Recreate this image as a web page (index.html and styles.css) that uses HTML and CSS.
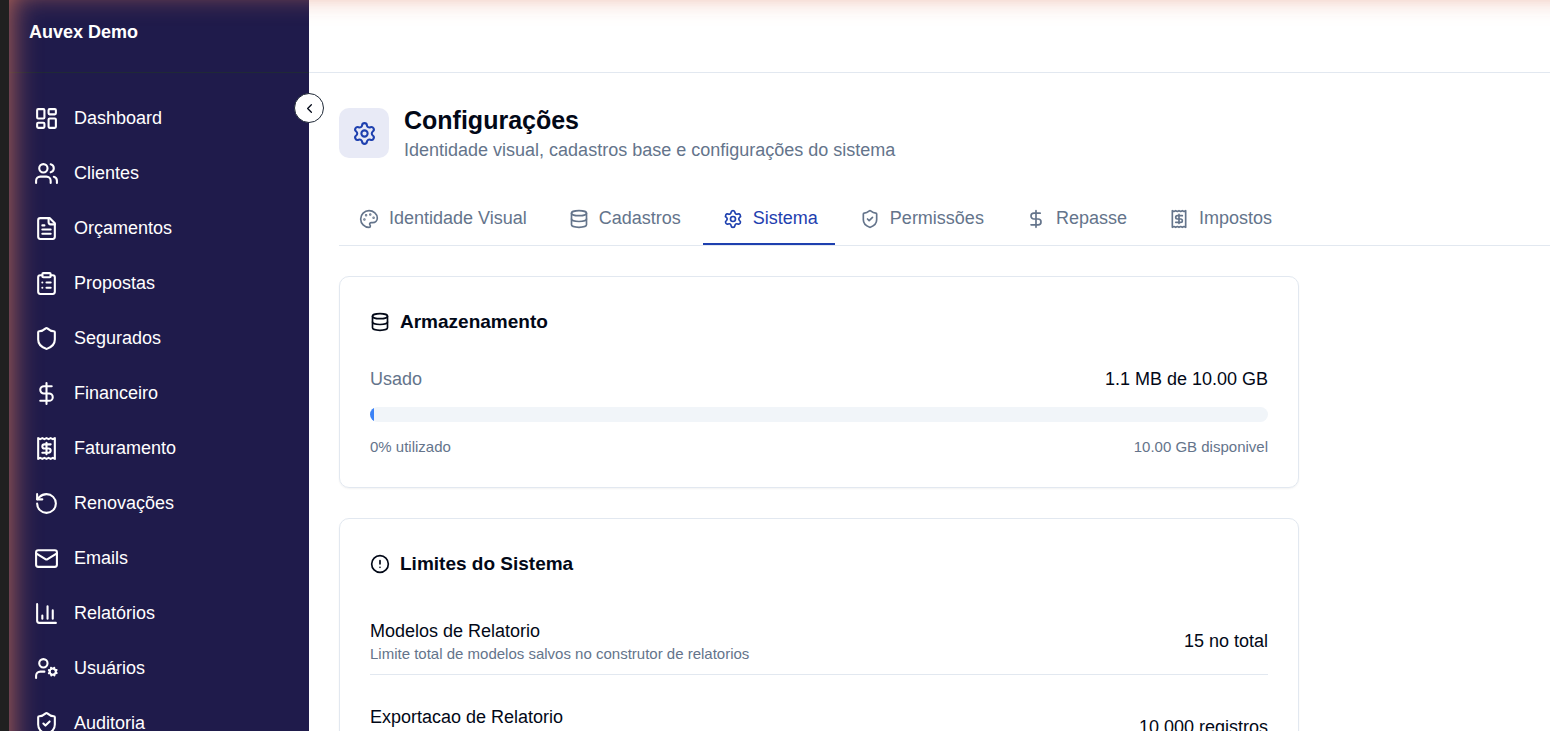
FILE: index.html
```html
<!DOCTYPE html>
<html lang="pt-br">
<head>
    <meta charset="UTF-8">
    <meta name="viewport" content="width=device-width, initial-scale=1.0">
    <title>Auvex Demo - Configurações</title>
    <link rel="stylesheet" href="styles.css">
</head>
<body>
    <svg class="sprite" aria-hidden="true">
        <symbol id="dashboard" viewBox="0 0 24 24"><rect width="7" height="9" x="3" y="3" rx="1"/><rect width="7" height="5" x="14" y="3" rx="1"/><rect width="7" height="9" x="14" y="12" rx="1"/><rect width="7" height="5" x="3" y="16" rx="1"/></symbol>
        <symbol id="users" viewBox="0 0 24 24"><path d="M16 21v-2a4 4 0 0 0-4-4H6a4 4 0 0 0-4 4v2"/><circle cx="9" cy="7" r="4"/><path d="M22 21v-2a4 4 0 0 0-3-3.87M16 3.13a4 4 0 0 1 0 7.75"/></symbol>
        <symbol id="file" viewBox="0 0 24 24"><path d="M15 2H6a2 2 0 0 0-2 2v16a2 2 0 0 0 2 2h12a2 2 0 0 0 2-2V7Z"/><path d="M14 2v4a2 2 0 0 0 2 2h4M10 9H8M16 13H8M16 17H8"/></symbol>
        <symbol id="clipboard" viewBox="0 0 24 24"><rect width="8" height="4" x="8" y="2" rx="1"/><path d="M16 4h2a2 2 0 0 1 2 2v14a2 2 0 0 1-2 2H6a2 2 0 0 1-2-2V6a2 2 0 0 1 2-2h2M12 11h4M12 16h4M8 11h.01M8 16h.01"/></symbol>
        <symbol id="shield" viewBox="0 0 24 24"><path d="M20 13c0 5-3.5 7.5-7.66 8.95a1 1 0 0 1-.67-.01C7.5 20.5 4 18 4 13V6a1 1 0 0 1 1-1c2 0 4.5-1.2 6.24-2.72a1.17 1.17 0 0 1 1.52 0C14.51 3.81 17 5 19 5a1 1 0 0 1 1 1z"/></symbol>
        <symbol id="shield-check" viewBox="0 0 24 24"><path d="M20 13c0 5-3.5 7.5-7.66 8.95a1 1 0 0 1-.67-.01C7.5 20.5 4 18 4 13V6a1 1 0 0 1 1-1c2 0 4.5-1.2 6.24-2.72a1.17 1.17 0 0 1 1.52 0C14.51 3.81 17 5 19 5a1 1 0 0 1 1 1z"/><path d="m9 12 2 2 4-4"/></symbol>
        <symbol id="dollar" viewBox="0 0 24 24"><path d="M12 2v20M17 5H9.5a3.5 3.5 0 0 0 0 7h5a3.5 3.5 0 0 1 0 7H6"/></symbol>
        <symbol id="receipt" viewBox="0 0 24 24"><path d="M4 2v20l2-1 2 1 2-1 2 1 2-1 2 1 2-1 2 1V2l-2 1-2-1-2 1-2-1-2 1-2-1-2 1Z"/><path d="M16 8h-6a2 2 0 1 0 0 4h4a2 2 0 1 1 0 4H8M12 17.5v-11"/></symbol>
        <symbol id="rotate" viewBox="0 0 24 24"><path d="M3 12a9 9 0 1 0 9-9 9.75 9.75 0 0 0-6.74 2.74L3 8"/><path d="M3 3v5h5"/></symbol>
        <symbol id="mail" viewBox="0 0 24 24"><rect width="20" height="16" x="2" y="4" rx="2"/><path d="m22 7-8.97 5.7a1.94 1.94 0 0 1-2.06 0L2 7"/></symbol>
        <symbol id="chart" viewBox="0 0 24 24"><path d="M3 3v16a2 2 0 0 0 2 2h16M18 17V9M13 17V5M8 17v-3"/></symbol>
        <symbol id="user-cog" viewBox="0 0 24 24"><circle cx="18" cy="15" r="3"/><circle cx="9" cy="7" r="4"/><path d="M10 15H6a4 4 0 0 0-4 4v2M21.7 16.4l-.9-.3M15.2 13.9l-.9-.3M16.6 18.7l.3-.9M19.1 12.2l.3-.9M19.6 18.7l-.4-1M16.8 12.3l-.4-1M14.3 16.6l1-.4M20.7 13.8l1-.4"/></symbol>
        <symbol id="settings" viewBox="0 0 24 24"><path d="M9.671 4.136a2.34 2.34 0 0 1 4.659 0 2.34 2.34 0 0 0 3.319 1.915 2.34 2.34 0 0 1 2.33 4.033 2.34 2.34 0 0 0 0 3.831 2.34 2.34 0 0 1-2.33 4.033 2.34 2.34 0 0 0-3.319 1.915 2.34 2.34 0 0 1-4.659 0 2.34 2.34 0 0 0-3.32-1.915 2.34 2.34 0 0 1-2.33-4.033 2.34 2.34 0 0 0 0-3.831A2.34 2.34 0 0 1 6.35 6.051a2.34 2.34 0 0 0 3.319-1.915"/><circle cx="12" cy="12" r="3"/></symbol>
        <symbol id="palette" viewBox="0 0 24 24"><path d="M12 2C6.5 2 2 6.5 2 12s4.5 10 10 10c.926 0 1.648-.746 1.648-1.688 0-.437-.18-.835-.437-1.125-.29-.289-.438-.652-.438-1.125a1.64 1.64 0 0 1 1.668-1.668h1.996c3.051 0 5.555-2.503 5.555-5.554C21.965 6.012 17.461 2 12 2z"/><g fill="currentColor"><circle cx="13.5" cy="6.5" r=".5"/><circle cx="17.5" cy="10.5" r=".5"/><circle cx="8.5" cy="7.5" r=".5"/><circle cx="6.5" cy="12.5" r=".5"/></g></symbol>
        <symbol id="database" viewBox="0 0 24 24"><ellipse cx="12" cy="5" rx="9" ry="3"/><path d="M3 5v14a9 3 0 0 0 18 0V5"/><path d="M3 12a9 3 0 0 0 18 0"/></symbol>
        <symbol id="alert" viewBox="0 0 24 24"><circle cx="12" cy="12" r="10"/><path d="M12 8v4M12 16h.01"/></symbol>
        <symbol id="chevron" viewBox="0 0 24 24"><path d="m15 18-6-6 6-6"/></symbol>
    </svg>

    <div class="app">
        <aside class="sidebar">
            <div class="brand">Auvex Demo</div>
            <button class="toggle" type="button" aria-label="Recolher menu"><svg class="icon icon-xs"><use href="#chevron"/></svg></button>
            <nav class="menu">
                <a href="#"><svg class="icon"><use href="#dashboard"/></svg>Dashboard</a>
                <a href="#"><svg class="icon"><use href="#users"/></svg>Clientes</a>
                <a href="#"><svg class="icon"><use href="#file"/></svg>Orçamentos</a>
                <a href="#"><svg class="icon"><use href="#clipboard"/></svg>Propostas</a>
                <a href="#"><svg class="icon"><use href="#shield"/></svg>Segurados</a>
                <a href="#"><svg class="icon"><use href="#dollar"/></svg>Financeiro</a>
                <a href="#"><svg class="icon"><use href="#receipt"/></svg>Faturamento</a>
                <a href="#"><svg class="icon"><use href="#rotate"/></svg>Renovações</a>
                <a href="#"><svg class="icon"><use href="#mail"/></svg>Emails</a>
                <a href="#"><svg class="icon"><use href="#chart"/></svg>Relatórios</a>
                <a href="#"><svg class="icon"><use href="#user-cog"/></svg>Usuários</a>
                <a href="#"><svg class="icon"><use href="#shield-check"/></svg>Auditoria</a>
            </nav>
        </aside>

        <div class="main">
            <header class="topbar"></header>

            <main class="content">
                <div class="page-title">
                    <div class="page-icon"><svg class="icon"><use href="#settings"/></svg></div>
                    <div>
                        <h1>Configurações</h1>
                        <p>Identidade visual, cadastros base e configurações do sistema</p>
                    </div>
                </div>

                <div class="tabs" role="tablist">
                    <button class="tab" type="button" role="tab"><svg class="icon icon-sm"><use href="#palette"/></svg>Identidade Visual</button>
                    <button class="tab" type="button" role="tab"><svg class="icon icon-sm"><use href="#database"/></svg>Cadastros</button>
                    <button class="tab active" type="button" role="tab" aria-selected="true"><svg class="icon icon-sm"><use href="#settings"/></svg>Sistema</button>
                    <button class="tab" type="button" role="tab"><svg class="icon icon-sm"><use href="#shield-check"/></svg>Permissões</button>
                    <button class="tab" type="button" role="tab"><svg class="icon icon-sm"><use href="#dollar"/></svg>Repasse</button>
                    <button class="tab" type="button" role="tab"><svg class="icon icon-sm"><use href="#receipt"/></svg>Impostos</button>
                </div>

                <div class="cards">
                    <section class="card">
                        <h2><svg class="icon icon-sm"><use href="#database"/></svg>Armazenamento</h2>
                        <div class="storage">
                            <div class="line"><span class="muted">Usado</span><span>1.1 MB de 10.00 GB</span></div>
                            <div class="bar" role="progressbar" aria-label="Armazenamento usado" aria-valuenow="0" aria-valuemin="0" aria-valuemax="100"><div class="bar-fill"></div></div>
                            <div class="line small muted"><span>0% utilizado</span><span>10.00 GB disponivel</span></div>
                        </div>
                    </section>

                    <section class="card">
                        <h2><svg class="icon icon-sm"><use href="#alert"/></svg>Limites do Sistema</h2>
                        <div class="limits">
                            <div class="limit">
                                <div>
                                    <p>Modelos de Relatorio</p>
                                    <p class="small muted">Limite total de modelos salvos no construtor de relatorios</p>
                                </div>
                                <span>15 no total</span>
                            </div>
                            <div class="limit">
                                <div>
                                    <p>Exportacao de Relatorio</p>
                                    <p class="small muted">Limite de registros por exportacao</p>
                                </div>
                                <span>10.000 registros</span>
                            </div>
                        </div>
                    </section>
                </div>
            </main>
        </div>
    </div>
    <div class="glow"></div>
</body>
</html>
```

FILE: styles.css
```css
* {
    box-sizing: border-box;
}

body {
    font-family: "Liberation Sans", Arial, sans-serif;
    font-size: 18px;
    line-height: 25px;
    color: #020817;
    background-color: #fff;
    margin: 0;
    border-left: 9px solid #202020;
    overflow: hidden;
}

h1, h2, p {
    margin: 0;
}

button {
    font: inherit;
    cursor: pointer;
}

.sprite {
    display: none;
}

.icon {
    width: 25px;
    height: 25px;
    flex-shrink: 0;
    fill: none;
    stroke: currentColor;
    stroke-width: 2;
    stroke-linecap: round;
    stroke-linejoin: round;
}

.icon-sm {
    width: 20px;
    height: 20px;
}

.icon-xs {
    width: 15px;
    height: 15px;
}

.app {
    display: flex;
    height: 100vh;
}

/* Menu lateral */
.sidebar {
    position: relative;
    width: 300px;
    flex-shrink: 0;
    background-color: #1f1b4b;
    color: #fff;
}

.brand {
    height: 73px;
    padding: 20px;
    font-weight: bold;
    border-bottom: 1px solid #1f2937;
}

.toggle {
    position: absolute;
    top: 93px;
    right: -15px;
    width: 30px;
    height: 30px;
    padding: 0;
    display: flex;
    align-items: center;
    justify-content: center;
    color: #020817;
    background-color: #fff;
    border: 1px solid #1f2937;
    border-radius: 50%;
}

.menu {
    display: flex;
    flex-direction: column;
    gap: 10px;
    padding: 23px 10px;
}

.menu a {
    display: flex;
    align-items: center;
    gap: 15px;
    height: 45px;
    padding: 0 15px;
    color: #fff;
    text-decoration: none;
}

/* Conteudo */
.main {
    flex: 1;
    min-width: 0;
}

.topbar {
    height: 73px;
    border-bottom: 1px solid #e2e8f0;
}

.content {
    padding: 30px 0 30px 30px;
}

.page-title {
    display: flex;
    align-items: center;
    gap: 15px;
}

.page-title p {
    color: #64748b;
}

.page-icon {
    display: flex;
    align-items: center;
    justify-content: center;
    width: 50px;
    height: 50px;
    color: #1e40af;
    background-color: #e8eaf6;
    border-radius: 10px;
}

h1 {
    font-size: 25px;
    line-height: 35px;
}

.tabs {
    display: flex;
    gap: 5px;
    margin-top: 29px;
    border-bottom: 1px solid #e2e8f0;
}

.tab {
    display: flex;
    align-items: center;
    gap: 10px;
    padding: 14px 17px 12px 20px;
    color: #64748b;
    background: none;
    border: 0;
    border-bottom: 2px solid transparent;
}

.tab.active {
    color: #1e40af;
    border-bottom-color: #1e40af;
}

.cards {
    display: flex;
    flex-direction: column;
    gap: 30px;
    max-width: 960px;
    margin-top: 30px;
}

.card {
    padding: 30px;
    border: 1px solid #e2e8f0;
    border-radius: 10px;
    box-shadow: 0 1px 2px rgba(0, 0, 0, 0.05);
}

h2 {
    display: flex;
    align-items: center;
    gap: 10px;
    font-size: 19px;
    line-height: 30px;
}

.muted {
    color: #64748b;
}

.small {
    font-size: 15px;
    line-height: 20px;
}

.storage {
    display: flex;
    flex-direction: column;
    gap: 15px;
    margin-top: 30px;
}

.line {
    display: flex;
    justify-content: space-between;
}

.bar {
    height: 15px;
    background-color: #f1f5f9;
    border-radius: 8px;
    overflow: hidden;
}

.bar-fill {
    width: 4px;
    height: 100%;
    background-color: #3b82f6;
}

.limits {
    display: flex;
    flex-direction: column;
    gap: 20px;
    margin-top: 30px;
}

.limit {
    display: flex;
    align-items: center;
    justify-content: space-between;
    padding: 10px 0;
    border-bottom: 1px solid #e2e8f0;
}

/* Brilho nas bordas da janela */
.glow {
    position: fixed;
    top: -10px;
    left: 9px;
    right: -40px;
    bottom: -40px;
    pointer-events: none;
    box-shadow: inset 0 0 30px rgba(217, 119, 87, 0.9);
}
```
